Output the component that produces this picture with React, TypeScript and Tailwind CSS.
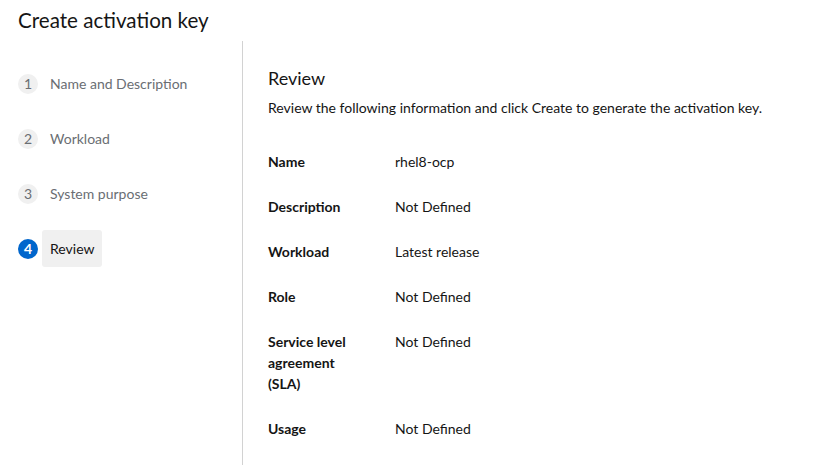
import React from 'react';

const STEPS = ['Name and Description', 'Workload', 'System purpose', 'Review'];

const ROWS: { label: string; value: string }[] = [
    { label: 'Name', value: 'rhel8-ocp' },
    { label: 'Description', value: 'Not Defined' },
    { label: 'Workload', value: 'Latest release' },
    { label: 'Role', value: 'Not Defined' },
    { label: 'Service level agreement (SLA)', value: 'Not Defined' },
    { label: 'Usage', value: 'Not Defined' },
];

export default function App() {
    const active = 3;
    return (
        <div className="w-[836px] h-[465px] bg-white overflow-hidden text-[#151515]" style={{ fontFamily: 'Lato, "Liberation Sans", sans-serif' }}>
            <h1 className="pl-[18px] pt-[7px] h-[41px] text-[20.6px] leading-[26px]">Create activation key</h1>
            <div className="flex h-[424px]">
                {/* wizard nav */}
                <nav className="w-[243px] shrink-0 border-r border-[#d2d2d2] pl-[18px] pt-[24px]">
                    <ol className="flex flex-col gap-[18px]">
                        {STEPS.map((step, i) => (
                            <li key={step} className="flex items-center gap-[4px] h-[37px]">
                                <span
                                    className={`w-[20px] h-[20px] rounded-full flex items-center justify-center text-[14px] ${i === active ? 'bg-[#0066cc] text-white font-bold' : 'bg-[#f0f0f0] text-[#6a6e73]'}`}
                                >
                                    {i + 1}
                                </span>
                                <span
                                    className={`text-[14px] px-[8px] h-[37px] flex items-center rounded-[3px] ${i === active ? 'bg-[#f0f0f0] text-[#151515]' : 'text-[#6a6e73]'}`}
                                >
                                    {step}
                                </span>
                            </li>
                        ))}
                    </ol>
                </nav>
                {/* review body */}
                <main className="flex-1 pl-[25px] pt-[24px]">
                    <h2 className="text-[18px] leading-[26px]">Review</h2>
                    <p className="text-[14px] leading-[21px] mt-[6px]">
                        Review the following information and click Create to generate the activation key.
                    </p>
                    <dl className="mt-[33px] grid grid-cols-[127px_1fr] gap-y-[24px] text-[14px] leading-[21px]">
                        {ROWS.map(row => (
                            <React.Fragment key={row.label}>
                                <dt className="font-bold w-[100px]">{row.label}</dt>
                                <dd>{row.value}</dd>
                            </React.Fragment>
                        ))}
                    </dl>
                </main>
            </div>
        </div>
    );
}
